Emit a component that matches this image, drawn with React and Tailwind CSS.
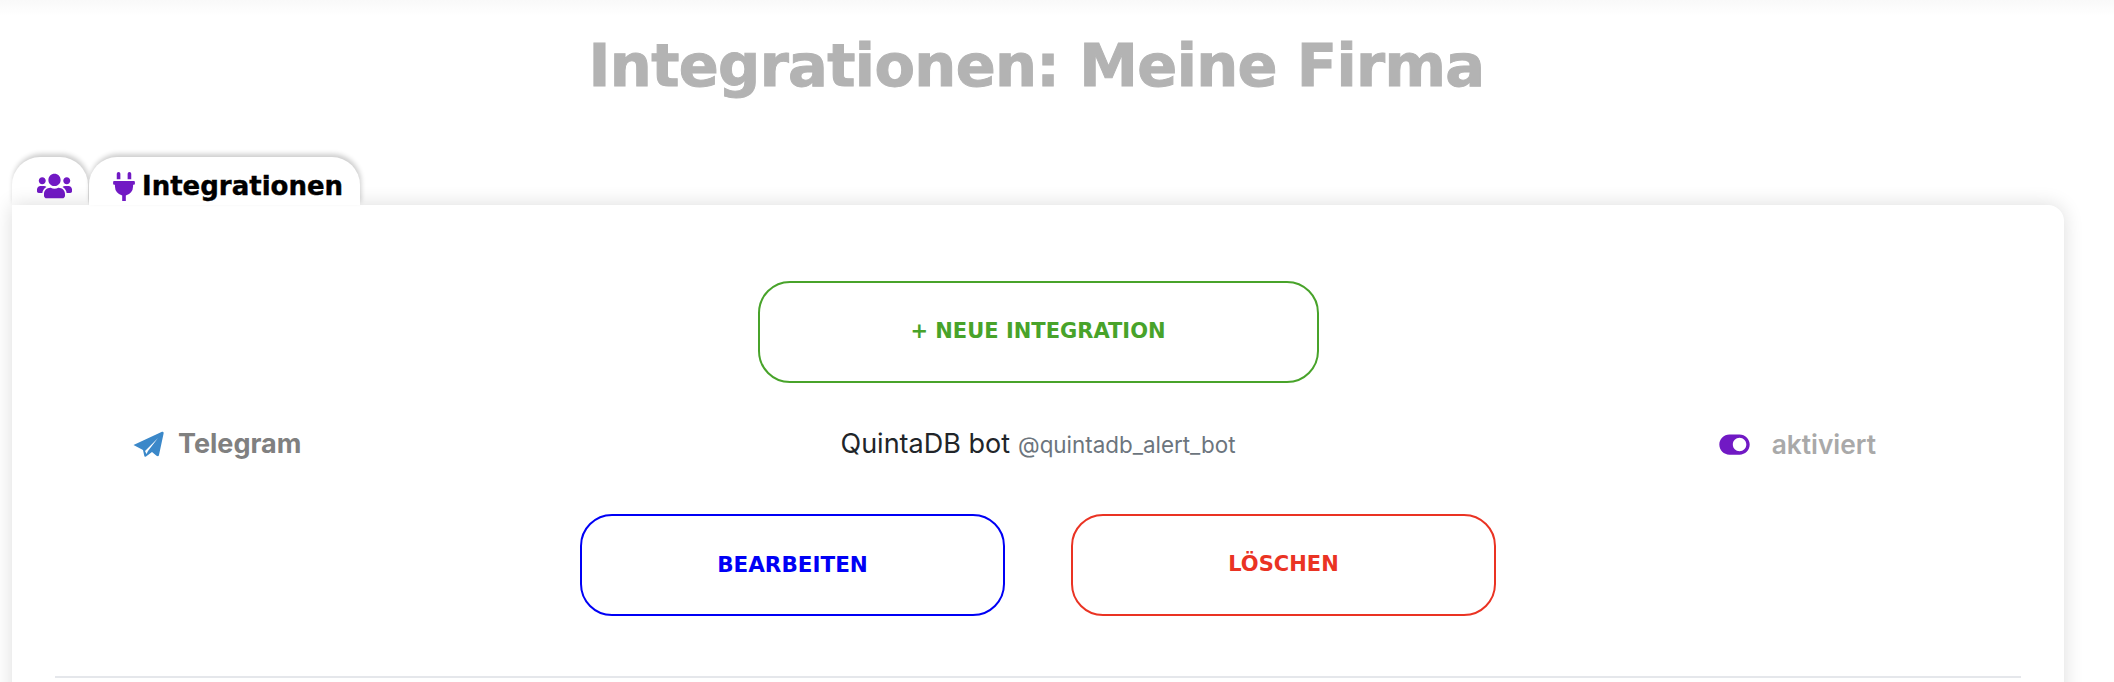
import { FaUsers, FaPlug, FaToggleOn } from "react-icons/fa";

const display = "font-['DejaVu_Sans',sans-serif] font-bold";
const ui = "font-['Inter',sans-serif]";

function OutlineButton({ label, className }) {
  return (
    <button
      type="button"
      className={`flex h-[102px] items-center justify-center rounded-[32px] border-2 bg-white ${display} ${className}`}
    >
      {label}
    </button>
  );
}

function TelegramPlane() {
  return (
    <svg viewBox="8 5 31 27" className="h-[27px] w-[31px]">
      <path
        fill="#3b88c9"
        d="M8.5 19 L37 5.8 Q39 5.2 38.6 7.5 L34 29 Q33.5 31 31.5 29.8 L27 26 L21 30.5 Q19.5 31.5 19.2 29.5 L18 24 Z"
      />
      <path fill="#ffffff" d="M20 25 L33 12 L23 25 L21.5 28 Z" />
    </svg>
  );
}

export default function App() {
  return (
    <div className="h-[682px] overflow-hidden bg-white">
      <div className="h-[16px] bg-gradient-to-b from-[#f9f9f9] to-white" />

      <h1
        className={`mt-[14px] mr-[50px] ml-[9px] h-[127px] text-center text-[59px] leading-[72px] tracking-[-0.65px] text-[#b3b3b3] [-webkit-text-stroke:1px_#b3b3b3] ${display}`}
      >
        Integrationen: Meine Firma
      </h1>

      <div className="ml-[12px] flex h-[48px] items-stretch gap-[1px]">
        <div className="flex w-[76px] items-center justify-center rounded-t-[28px] bg-white pt-[10px] pl-[8px] shadow-[1px_-3px_5px_rgba(0,0,0,0.2)]">
          <FaUsers className="h-[28px] w-[35px] text-[#7119c4]" />
        </div>
        <div className="relative z-10 flex w-[271px] items-center rounded-t-[28px] bg-white pt-[10px] pl-[24px] shadow-[1px_-3px_5px_rgba(0,0,0,0.2)]">
          <FaPlug className="h-[29px] w-[22px] text-[#7119c4]" />
          <span className={`ml-[7px] text-[26px] text-black [-webkit-text-stroke:0.4px_#000] ${display}`}>
            Integrationen
          </span>
        </div>
      </div>

      <div className="relative mr-[50px] ml-[12px] h-[600px] rounded-tr-[16px] bg-white px-[43px] pt-[76px] shadow-[0_0_20px_rgba(0,0,0,0.14)]">
        <div className="flex justify-center">
          <OutlineButton
            label="+ NEUE INTEGRATION"
            className="w-[561px] border-[#48a32a] text-[21px] text-[#48a32a]"
          />
        </div>

        <div className={`mt-[41px] grid h-[32px] grid-cols-[1fr_auto_1fr] items-center ${ui}`}>
          <div className="flex items-center pl-[78px]">
            <TelegramPlane />
            <span className="ml-[14px] text-[27px] font-bold text-[#808080]">Telegram</span>
          </div>
          <div className="flex items-baseline gap-[8px]">
            <span className="text-[27px] text-[#212529]">QuintaDB bot</span>
            <span className="text-[22.4px] text-[#6c757d]">@quintadb_alert_bot</span>
          </div>
          <div className="flex items-center justify-end pr-[145px]">
            <FaToggleOn className="h-[27px] w-[31px] text-[#7119c4]" />
            <span className="ml-[22px] text-[26.3px] font-semibold text-[#a9a9a9]">aktiviert</span>
          </div>
        </div>

        <div className="mt-[58px] flex justify-center gap-[66px]">
          <OutlineButton label="BEARBEITEN" className="w-[425px] border-[#0000f5] text-[21.5px] text-[#0000f5]" />
          <OutlineButton label="LÖSCHEN" className="w-[425px] border-[#ea3323] text-[21px] text-[#ea3323]" />
        </div>

        <hr className="mt-[60px] border-t-2 border-[#e5e7eb]" />
      </div>
    </div>
  );
}
